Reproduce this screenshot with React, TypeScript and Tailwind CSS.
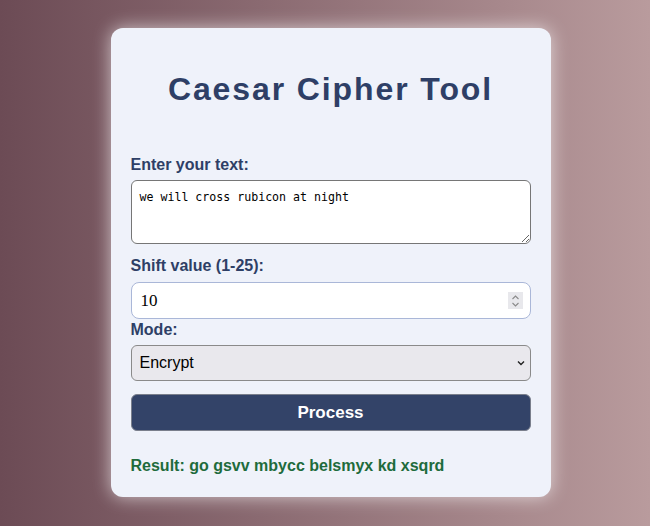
import { useState } from "react";

function caesar(text: string, shift: number, mode: string) {
  const s = mode === "decrypt" ? (26 - (shift % 26)) % 26 : shift % 26;
  return text.replace(/[a-z]/gi, (ch) => {
    const base = ch <= "Z" ? 65 : 97;
    return String.fromCharCode(((ch.charCodeAt(0) - base + s) % 26) + base);
  });
}

export default function App() {
  const [text, setText] = useState("we will cross rubicon at night");
  const [shift, setShift] = useState(10);
  const [mode, setMode] = useState("encrypt");
  const [result, setResult] = useState(caesar("we will cross rubicon at night", 10, "encrypt"));

  return (
    <main className="min-h-screen h-[526px] bg-linear-to-r from-[#6c4b55] to-[#b99b9d] pl-[11px] pt-[28px] font-['Liberation_Sans',Arial,sans-serif]">
      <div className="mx-auto w-[440px] rounded-xl bg-[#eff2fa] px-5 pt-[43px] pb-[22px] shadow-[0_0_18px_rgba(255,255,255,0.65)]">
        <h1 className="text-center text-[32px] leading-[37px] font-bold tracking-[1.9px] text-[#2e3f66]">
          Caesar Cipher Tool
        </h1>

        <label className="mt-[48px] mb-[6px] block text-base leading-[18px] font-bold text-[#2e3f66]">
          Enter your text:
        </label>
        <textarea
          value={text}
          onChange={(e) => setText(e.target.value)}
          className="block h-16 w-full rounded-md border border-[#767676] bg-white px-2 py-[8px] font-['DejaVu_Sans_Mono',monospace] text-[11.6px] text-black outline-none"
        />

        <label className="mt-[13px] mb-[7px] block text-base leading-[18px] font-bold text-[#2e3f66]">
          Shift value (1-25):
        </label>
        <div className="relative">
          <input
            type="number"
            min={1}
            max={25}
            value={shift}
            onChange={(e) => setShift(Number(e.target.value))}
            className="block h-[37px] w-full rounded-lg border border-[#aab7d8] bg-white pl-[9px] pr-2 font-['Liberation_Serif',serif] text-[17px] text-black outline-none [appearance:textfield] [&::-webkit-inner-spin-button]:appearance-none"
          />
          {/* spinner drawn so it shows without hover */}
          <span className="pointer-events-none absolute top-[10px] right-[8px] flex h-[17px] w-[15px] flex-col items-center justify-center bg-[#e8e8ec]">
            <svg width="9" height="14" viewBox="0 0 9 14" fill="none" stroke="#8a8a8a" strokeWidth="1.1">
              <path d="M1.5 5 L4.5 2 L7.5 5" />
              <path d="M1.5 9 L4.5 12 L7.5 9" />
            </svg>
          </span>
        </div>

        <label className="mt-[2px] mb-[6px] block text-base leading-[18px] font-bold text-[#2e3f66]">
          Mode:
        </label>
        <div className="relative">
          <select
            value={mode}
            onChange={(e) => setMode(e.target.value)}
            className="block h-9 w-full appearance-none rounded-md border border-[#8a8a8a] bg-[#e9e8ed] pl-2 pr-6 text-base text-black outline-none"
          >
            <option value="encrypt">Encrypt</option>
            <option value="decrypt">Decrypt</option>
          </select>
          <svg
            className="pointer-events-none absolute top-[15px] right-[6px]"
            width="8"
            height="6"
            viewBox="0 0 8 6"
            fill="none"
            stroke="#222"
            strokeWidth="1.4"
          >
            <path d="M1 1.5 L4 4.5 L7 1.5" />
          </svg>
        </div>

        <button
          onClick={() => setResult(caesar(text, shift, mode))}
          className="mt-[13px] block h-[37px] w-full rounded-md border border-[#7a7f8c] bg-[#334368] text-[17px] font-bold text-white"
        >
          Process
        </button>

        <p className="mt-[26px] text-base leading-[18px] font-bold text-[#1e6b3c]">
          Result: {result}
        </p>
      </div>
    </main>
  );
}
